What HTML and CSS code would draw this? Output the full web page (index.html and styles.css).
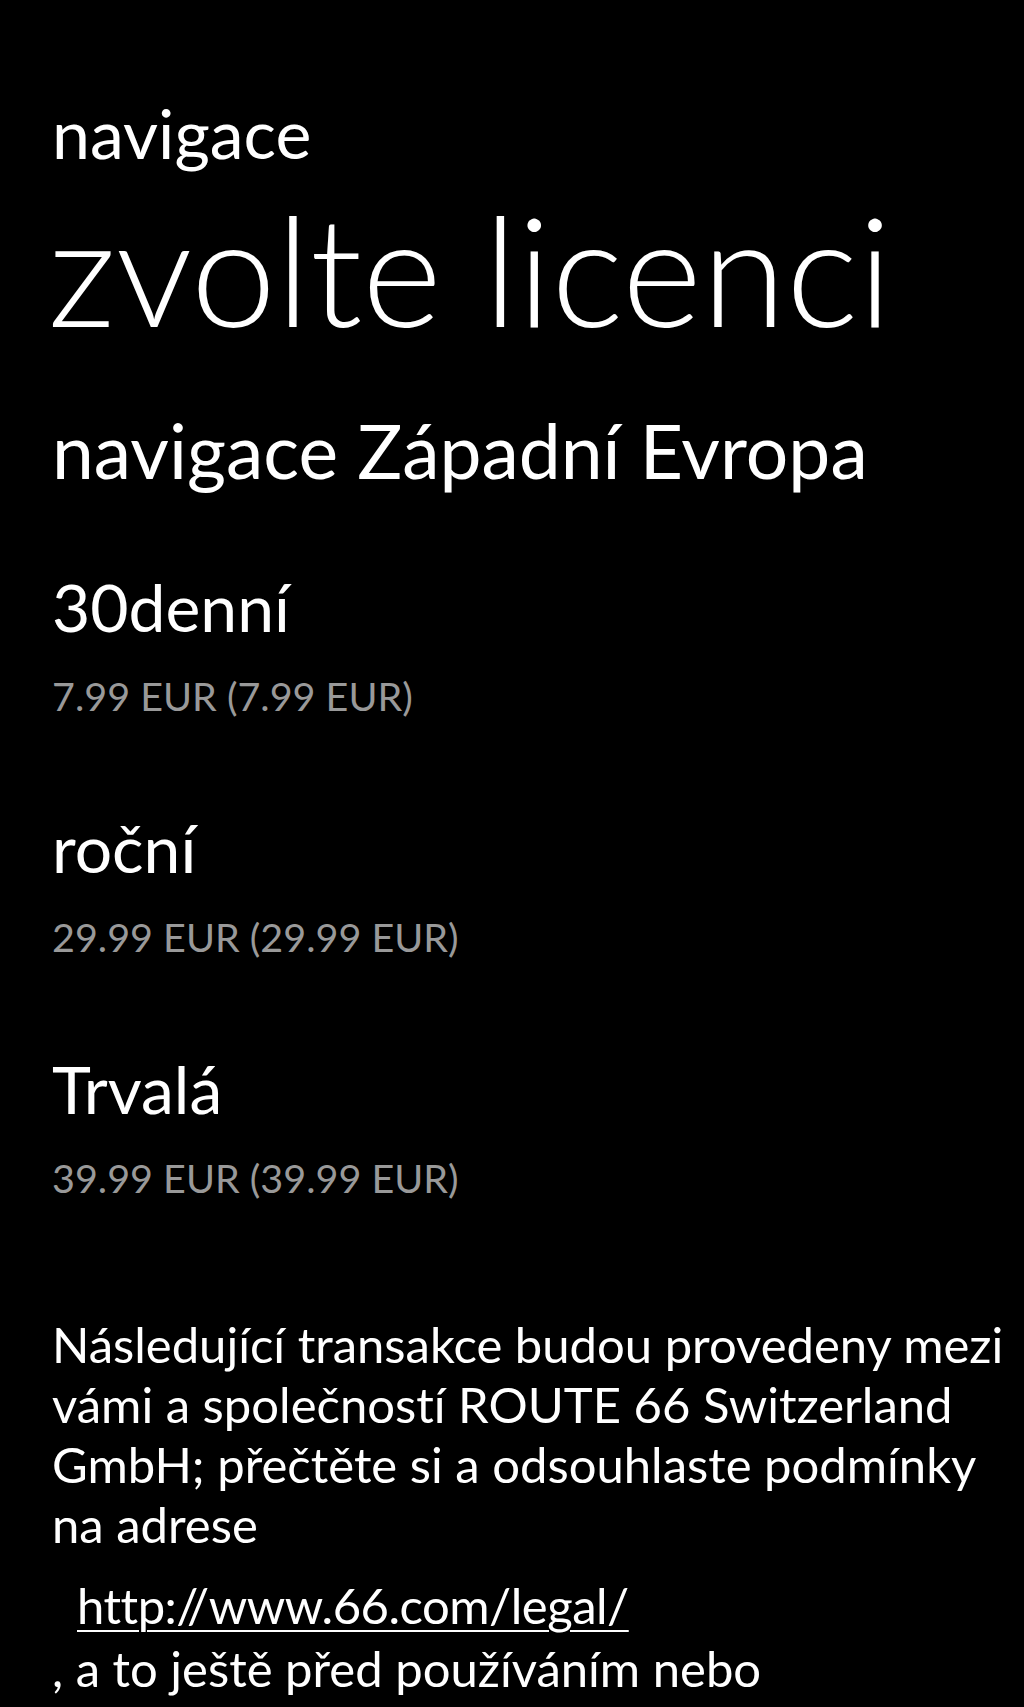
FILE: index.html
```html
<!DOCTYPE html>
<html lang="cs">
<head>
    <meta charset="UTF-8">
    <meta name="viewport" content="width=device-width, initial-scale=1.0">
    <title>zvolte licenci</title>
    <link rel="stylesheet" href="styles.css">
</head>
<body>
    <div class="page">
        <div class="app-title">navigace</div>
        <h1 class="page-title">zvolte licenci</h1>

        <h2 class="product">navigace Západní Evropa</h2>

        <div class="licences">
            <div class="licence">
                <div class="licence-name">30denní</div>
                <div class="licence-price">7.99 EUR (7.99 EUR)</div>
            </div>
            <div class="licence">
                <div class="licence-name">roční</div>
                <div class="licence-price">29.99 EUR (29.99 EUR)</div>
            </div>
            <div class="licence">
                <div class="licence-name">Trvalá</div>
                <div class="licence-price">39.99 EUR (39.99 EUR)</div>
            </div>
        </div>

        <div class="terms">
            <p class="terms-text">Následující transakce budou provedeny mezi<br>vámi a společností ROUTE 66 Switzerland<br>GmbH; přečtěte si a odsouhlaste podmínky<br>na adrese</p>
            <a class="terms-link" href="#">http://www.66.com/legal/</a>
            <p class="terms-text terms-tail">, a to ještě před používáním nebo</p>
        </div>
    </div>
</body>
</html>
```

FILE: styles.css
```css
body {
    margin: 0;
    background-color: #000;
    color: #fff;
    font-family: Lato, "Open Sans", sans-serif;
    font-variant-ligatures: none;
}
.page {
    padding: 91px 0 0 52px;
}
.app-title {
    font-size: 68px;
    line-height: 84px;
    font-weight: 400;
}
.page-title {
    margin: 5px 0 0 -4px;
    font-size: 153px;
    line-height: 176px;
    font-weight: 300;
}
.product {
    margin: 47px 0 0;
    font-size: 75px;
    line-height: 94px;
    font-weight: 400;
}
.licences {
    display: flex;
    flex-direction: column;
    gap: 84px;
    margin-top: 68px;
}
.licence-name {
    font-size: 66px;
    line-height: 84px;
}
.licence-price {
    margin-top: 21px;
    font-size: 39.5px;
    line-height: 52px;
    color: #999;
}
.terms {
    margin-top: 110px;
    font-size: 49px;
    line-height: 60px;
    white-space: nowrap;
}
.terms-text {
    margin: 0;
}
.terms-link {
    display: inline-block;
    margin: 21px 0 0 25px;
    color: #fff;
    letter-spacing: -0.5px;
    text-decoration: underline;
    text-decoration-thickness: 2px;
    text-underline-offset: 6px;
}
.terms-tail {
    margin-top: 3px;
}
```
